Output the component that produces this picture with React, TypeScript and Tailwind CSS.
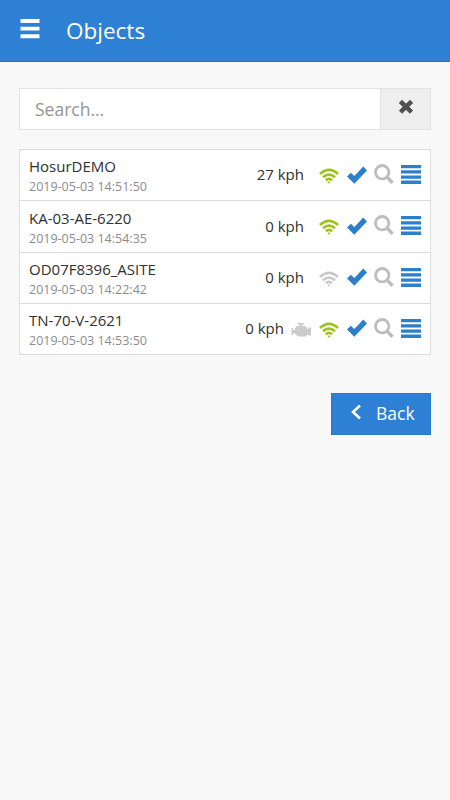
type TrackedObject = {
  name: string;
  time: string;
  speed: string;
  online: boolean;
  engine?: boolean;
};

const objects: TrackedObject[] = [
  { name: "HosurDEMO", time: "2019-05-03 14:51:50", speed: "27 kph", online: true },
  { name: "KA-03-AE-6220", time: "2019-05-03 14:54:35", speed: "0 kph", online: true },
  { name: "OD07F8396_ASITE", time: "2019-05-03 14:22:42", speed: "0 kph", online: false },
  { name: "TN-70-V-2621", time: "2019-05-03 14:53:50", speed: "0 kph", online: true, engine: true },
];

// ─── Icons ───────────────────────────────────────────────────────

function MenuIcon() {
  return (
    <svg width="20" height="20" viewBox="0 0 20 20" fill="#fff">
      <path d="M.5 0h19v4H.5zM.5 7.8h19v3.8H.5zM.5 15.3h19v4H.5z" />
    </svg>
  );
}

function WifiIcon({ className }: { className: string }) {
  return (
    <svg
      className={className}
      width="20"
      height="16"
      viewBox="0 0 20 16"
      fill="none"
      stroke="currentColor"
      strokeWidth="2.7"
    >
      <path d="M1 6Q10-2.4 19 6M4 9.3Q10 4 16 9.3M6.9 12.2Q10 9.5 13.100 12.2" />
      <path d="M8.300 14Q10 12.900 11.700 14L10 15.700z" fill="currentColor" stroke="none" />
    </svg>
  );
}

function CheckIcon() {
  return (
    <svg width="20" height="18" viewBox="0 0 20 18" fill="#2d7fcc">
      <path d="M0 10.6 3.9 6.8 7.3 10.1 16.3.6 20 4.4 7.3 17.8z" />
    </svg>
  );
}

function SearchIcon() {
  return (
    <svg width="20" height="21" viewBox="0 0 20 21" fill="none" stroke="#bdbdbd">
      <circle cx="8.2" cy="8.2" r="6.7" strokeWidth="2.8" />
      <path d="m13 13.1 5.6 5.7" strokeWidth="3.4" />
    </svg>
  );
}

function ListIcon() {
  return (
    <svg width="20" height="19" viewBox="0 0 20 19" fill="#2d7fcc">
      <path d="M0 0h20v3.3H0zM0 5.2h20v3.3H0zM0 10.4h20v3.3H0zM0 15.6h20v3.3H0z" />
    </svg>
  );
}

function EngineIcon() {
  return (
    <svg width="20" height="14" viewBox="0 0 20 14" fill="#cbcbcb">
      <path d="M6.500 0h6.500v1.500h-2V3H14l2.200 2.200V6.500H17V4.500h3v8h-2.500L16.500 11.500 14.500 13.500H7L4 10.500H2V12H.5V5H2v2h1.500L5 3.500 6 3h2.500V1.500h-2z" />
    </svg>
  );
}

function CloseIcon() {
  return (
    <svg width="16" height="16" viewBox="0 0 16 16" fill="#505050" stroke="#505050" strokeLinejoin="round">
      <path d="M4 1.3 8 5.200 12 1.3 14.600 4 10.800 7.800 14.600 11.600 12 14.300 8 10.400 4 14.300 1.400 11.600 5.200 7.800 1.400 4z" />
    </svg>
  );
}

// ─── List row ────────────────────────────────────────────────────

function ObjectRow({ object }: { object: TrackedObject }) {
  return (
    <div className="flex h-[51.3px] items-start border-b border-[#dcdcdc] px-[9px]">
      <div className="flex-1 pt-[6.4px]">
        <div className="text-[15px] leading-5 text-[#303030]">{object.name}</div>
        <div className="text-[12.5px] leading-[21px] text-[#8c8c8c]">{object.time}</div>
      </div>
      <div className="flex h-[49px] items-center">
        <span className="text-[15px] text-[#303030]">{object.speed}</span>
        <div className="flex w-[35px] justify-end pt-[4px] pr-[8px] empty:w-[15px] empty:p-0">
          {object.engine && <EngineIcon />}
        </div>
        <WifiIcon className={object.online ? "mt-[3px] text-[#9fc21a]" : "mt-[3px] text-[#c8c8c8]"} />
        <div className="ml-2">
          <CheckIcon />
        </div>
        <div className="ml-[7px]">
          <SearchIcon />
        </div>
        <div className="ml-[7px]">
          <ListIcon />
        </div>
      </div>
    </div>
  );
}

export default function App() {
  return (
    <div className="h-[800px] w-[450px] bg-[#f8f8f8] font-['Open_Sans',sans-serif]">
      <header className="flex h-[62px] items-center border-b border-[#2372bd] bg-[#2d80d3] pl-5">
        <div className="mb-1">
          <MenuIcon />
        </div>
        <h1 className="ml-[26px] text-[22.5px] text-white">Objects</h1>
      </header>
      <main className="px-[19px] pt-[26px]">
        <div className="flex h-[42px] border border-[#e2e2e2] bg-white">
          <div className="flex flex-1 items-center pl-[15px] text-[17.5px] text-[#949494]">Search...</div>
          <button className="flex w-[50px] items-center justify-center border-l border-[#e2e2e2] bg-[#eee] pb-1">
            <CloseIcon />
          </button>
        </div>
        <div className="mt-[19px] border border-b-0 border-[#dcdcdc] bg-white">
          {objects.map((object) => (
            <ObjectRow key={object.name} object={object} />
          ))}
        </div>
        <div className="mt-[37.5px] flex justify-end">
          <button className="flex h-[42px] w-[100px] items-center border border-[#2879c8] bg-[#2d80d3] pb-[1px] pl-[18px] text-[17.5px] text-white">
            <svg className="mb-[2px]" width="12" height="16" viewBox="0 0 12 16" fill="none" stroke="#fff" strokeWidth="2.6">
              <path d="M10 1.5 3 8l7 6.5" />
            </svg>
            <span className="ml-[14px]">Back</span>
          </button>
        </div>
      </main>
    </div>
  );
}
